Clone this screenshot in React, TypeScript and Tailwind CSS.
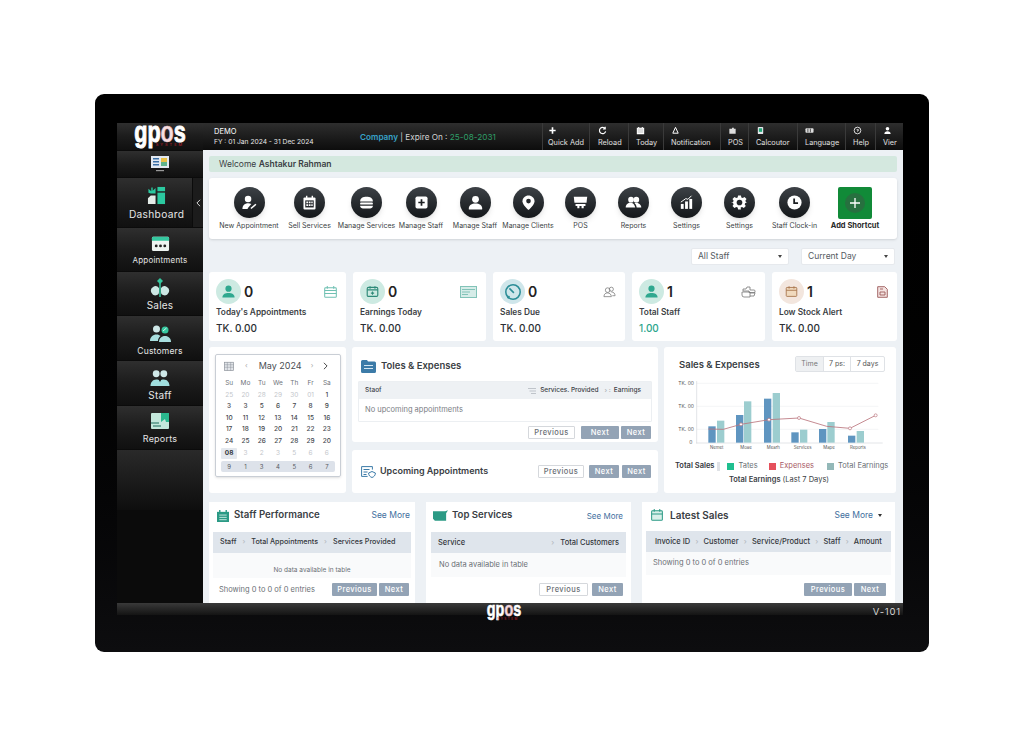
import React from "react";

const F = "font-['Inter','Noto_Sans',sans-serif]";

function Logo({ small }: { small?: boolean }) {
  return (
    <div className={small ? "relative h-[17px] w-[36px] shrink-0" : "relative h-[27px] w-[56px] shrink-0"}>
      <div className={small
        ? "flex justify-center font-['Liberation_Sans',sans-serif] font-bold text-[20px] leading-[10px] h-[10px] text-white scale-x-[0.72] [-webkit-text-stroke:0.6px_white]"
        : "flex justify-center font-['Liberation_Sans',sans-serif] font-bold text-[30px] leading-[17px] h-[17px] text-white scale-x-[0.72] [-webkit-text-stroke:1px_white]"}>
        <span>gp</span><span className="text-[#f4dfe1] [-webkit-text-stroke:0.6px_#e9b9bf]">o</span><span>s</span>
      </div>
      <div className={small
        ? "absolute left-[8px] right-0 top-[14px] text-center text-[3px] leading-[3px] tracking-[1.500px] text-[#d3202f]"
        : "absolute left-[20px] right-0 top-[20px] text-center text-[4px] leading-[4px] tracking-[2px] text-[#c51f2e]"}>SYSTEM</div>
    </div>
  );
}

const paths: Record<string, React.ReactNode> = {
  newappt: <><circle cx="10" cy="7" r="4.6" fill="#fff" /><path d="M2 21c0-5 3.6-8 8-8 1.8 0 3.3.4 4.6 1.2L9.5 20v1z" fill="#fff" /><path d="M14 20.5l7-6" stroke="#fff" strokeWidth="2.2" fill="none" /></>,
  sell: <><path d="M5 5h14a1.500 1.500 0 0 1 1.500 1.500v14A1.500 1.500 0 0 1 19 22H5a1.500 1.500 0 0 1-1.500-1.500v-14A1.500 1.500 0 0 1 5 5z" fill="#fff" /><rect x="7" y="2.500" width="2" height="4" fill="#fff" /><rect x="15" y="2.500" width="2" height="4" fill="#fff" /><path d="M6 9h12v10H6z" fill="#24272b" /><path d="M7.500 10.500h2.500V13H7.500zM11 10.500h2.500V13H11zM14.500 10.500h2V13h-2zM7.500 14.500h2.500V17H7.500zM11 14.500h2.500V17H11zM14.500 14.500h2V17h-2z" fill="#fff" /></>,
  burger: <><path d="M3 10.500C3 6 7 4 12 4s9 2 9 6.500z" fill="#fff" /><rect x="3" y="12" width="18" height="2.800" rx="1.200" fill="#fff" /><path d="M3 16.500h18v.5c0 2-2 3.500-4 3.500H7c-2 0-4-1.500-4-3.500z" fill="#fff" /></>,
  plus: <><rect x="3.500" y="3.500" width="17" height="17" rx="2.500" fill="#fff" /><path d="M12 7.500v9M7.500 12h9" stroke="#1c1f22" strokeWidth="2.400" /></>,
  user: <><circle cx="12" cy="7.500" r="4.800" fill="#fff" /><path d="M2.500 21c0-5 4-7.500 9.500-7.500S21.500 16 21.500 21c0 .5-.4 1-1 1h-17c-.6 0-1-.5-1-1z" fill="#fff" /></>,
  pin: <><path d="M12 2c-4.700 0-8.500 3.600-8.500 8.200C3.500 15.500 12 22.500 12 22.500s8.500-7 8.500-12.300C20.500 5.600 16.700 2 12 2z" fill="#fff" /><circle cx="12" cy="10" r="3.300" fill="#24272b" /></>,
  cart: <><path d="M2.500 4h19l-1 8.500h-17z" fill="#fff" /><path d="M5 14h14v3h-2.500v3h-3v-3h-3v3h-3v-3H5z" fill="#fff" /></>,
  users: <><circle cx="8.500" cy="8" r="4" fill="#fff" /><circle cx="16" cy="8" r="4" fill="#fff" /><path d="M1 19c0-4 3-6.500 7-6.500 3 0 5 1.500 6.500 6.500z" fill="#fff" /><path d="M15 12.500c4 0 8 2.500 8 6.500h-6.500C16 16 15 14 13.500 13z" fill="#fff" /></>,
  chart: <><rect x="4" y="14" width="4" height="7" fill="#fff" /><rect x="10" y="10.500" width="4" height="10.500" fill="#fff" /><rect x="16" y="7" width="4" height="14" fill="#fff" /><path d="M4 11.500l7-5 3 1 5-5" stroke="#fff" strokeWidth="1.400" fill="none" /></>,
  gear: <><path d="M10 2h4l.6 2.900 2 .9 2.500-1.600 2.800 2.800-1.600 2.500.9 2L23 12v0l-2.800.6-.9 2 1.600 2.500-2.800 2.800-2.500-1.600-2 .9L14 22h-4l-.6-2.800-2-.9-2.500 1.600-2.800-2.800 1.600-2.500-.9-2L0 12l2.800-.5.9-2-1.600-2.500 2.800-2.800 2.500 1.600 2-.9z" fill="#fff" /><circle cx="12" cy="12" r="4" fill="#24272b" /></>,
  clock: <><circle cx="12" cy="12" r="10" fill="#fff" /><path d="M11.500 6.500V13H17" stroke="#1c1f22" strokeWidth="2.500" fill="none" /></>,
};

function Glyph({ name, size }: { name: string; size: string }) {
  return <svg viewBox="0 0 24 24" className={size}>{paths[name]}</svg>;
}

const shortcuts = [
  { w: "w-[62px]", i: "newappt", l: "New Appointment" },
  { w: "w-[59px]", i: "sell", l: "Sell Services" },
  { w: "w-[55px]", i: "burger", l: "Manage Services" },
  { w: "w-[54px]", i: "plus", l: "Manage Staff" },
  { w: "w-[54px]", i: "user", l: "Manage Staff" },
  { w: "w-[52px]", i: "pin", l: "Manage Clients" },
  { w: "w-[53px]", i: "cart", l: "POS" },
  { w: "w-[53px]", i: "users", l: "Reports" },
  { w: "w-[53px]", i: "chart", l: "Settings" },
  { w: "w-[53px]", i: "gear", l: "Settings" },
  { w: "w-[57px]", i: "clock", l: "Staff Clock-in" },
];

const headerItems = [
  { w: "w-[47px]", pl: "pl-[5px]", t: "Quick Add", ic: <path d="M5 1.500v7M1.500 5h7" stroke="#fff" strokeWidth="1.800" /> },
  { w: "w-[39px]", pl: "pl-[8px]", t: "Reload", ic: <path d="M8 3a3.500 3.500 0 1 0 .5 3M8 .8V3.300H5.500" stroke="#fff" strokeWidth="1.300" fill="none" /> },
  { w: "w-[35px]", pl: "pl-[7px]", t: "Today", ic: <path d="M1.500 2.500h7v6h-7zM3 1v2M7 1v2" stroke="#fff" strokeWidth="1.200" fill="#ddd" /> },
  { w: "w-[57px]", pl: "pl-[7px]", t: "Notification", ic: <path d="M5 1.500L8 8H2z" stroke="#fff" strokeWidth="1.100" fill="none" /> },
  { w: "w-[28px]", pl: "pl-[7px]", t: "POS", ic: <path d="M1.500 3h3V2h2v1h2v5.500h-7z" fill="#ddd" /> },
  { w: "w-[49px]", pl: "pl-[7px]", t: "Calcoutor", ic: <><rect x="2" y="1" width="6" height="8" rx="1" fill="#e5e7eb" /><rect x="3.200" y="2.500" width="3.600" height="4" fill="#22a777" /></> },
  { w: "w-[48px]", pl: "pl-[7px]", t: "Language", ic: <><rect x="0.500" y="2.500" width="9" height="5" rx="1" fill="#ddd" /><path d="M3.200 3v4M6 3v4" stroke="#222" strokeWidth=".8" /></> },
  { w: "w-[30px]", pl: "pl-[7px]", t: "Help", ic: <><circle cx="5" cy="5" r="3.700" stroke="#fff" strokeWidth=".9" fill="none" /><path d="M4 4h2v1.200H5v1" stroke="#fff" strokeWidth=".8" fill="none" /></> },
  { w: "w-[28px]", pl: "pl-[7px]", t: "Vier", ic: <><circle cx="5" cy="3" r="2" fill="#fff" /><path d="M1.500 9c0-2.500 1.500-3.300 3.500-3.300S8.500 6.500 8.500 9z" fill="#fff" /></> },
];

function SideIcon({ name }: { name: string }) {
  if (name === "dash") return (
    <svg viewBox="0 0 20 20" className="w-[19px] h-[19px]">
      <rect x="11" y="1" width="8" height="4.500" fill="#2bc9a0" /><rect x="11" y="7" width="8" height="12" fill="#2bc9a0" />
      <path d="M1 19v-6l3-3h5v9z" fill="#e4ece8" /><path d="M1.500 3l3 2.500V1.500h1.500v3.500L9 2v6H4L1.500 7z" fill="#2bc9a0" />
    </svg>
  );
  if (name === "appt") return (
    <svg viewBox="0 0 20 20" className="w-[19px] h-[19px]">
      <rect x="1" y="3" width="18" height="15" rx="1.500" fill="#eef4f1" /><path d="M1 4.500A1.500 1.500 0 0 1 2.500 3h15A1.500 1.500 0 0 1 19 4.500V7H1z" fill="#35c79f" />
      <circle cx="5.500" cy="12.500" r="1.500" fill="#222" /><circle cx="10" cy="12.500" r="1.500" fill="#222" /><circle cx="14.500" cy="12.500" r="1.500" fill="#222" />
    </svg>
  );
  if (name === "sales") return (
    <svg viewBox="0 0 20 20" className="w-[20px] h-[20px]">
      <path d="M10 0l3 3-3 3-3-3z" fill="#35c79f" /><path d="M9 10a4.500 4.500 0 1 0-2 7c1.500-.5 2-1.500 2-3z" fill="#cde8e4" /><path d="M11 10a4.500 4.500 0 1 1 2 7c-1.500-.5-2-1.500-2-3z" fill="#cde8e4" />
      <path d="M10 5v14" stroke="#35c79f" strokeWidth="1.500" />
    </svg>
  );
  if (name === "cust") return (
    <svg viewBox="0 0 22 20" className="w-[23px] h-[20px]">
      <circle cx="7" cy="5" r="3.500" fill="#cfe8e8" /><circle cx="15.500" cy="6" r="3.500" fill="#35c79f" />
      <path d="M13.500 7l3.500-3" stroke="#fff" strokeWidth=".8" />
      <path d="M0.500 17c0-4 3-6.500 6.500-6.500 2 0 3 .7 4 1.500-1.500 1.200-2.500 3-2.500 5z" fill="#a8dede" /><path d="M9.500 18c0-3.500 2.500-6 6-6s6 2.500 6 6z" fill="#a8dede" />
    </svg>
  );
  if (name === "staff") return (
    <svg viewBox="0 0 22 20" className="w-[22px] h-[19px]">
      <circle cx="7" cy="5" r="3.600" fill="#cfe8e8" /><circle cx="15" cy="5" r="3.600" fill="#cfe8e8" />
      <path d="M1 18c0-4 2.500-7 6-7s4 2 4 2 .5-2 4-2 6 3 6 7z" fill="#9fdede" /><path d="M10 11l1 3 1-3z" fill="#111" />
    </svg>
  );
  if (name === "rep") return (
    <svg viewBox="0 0 20 20" className="w-[20px] h-[20px]">
      <rect x="1" y="2" width="18" height="16" rx="1" fill="#c4e8dc" /><path d="M11 2h8v9h-3l-1 -3-4 3z" fill="#2bb98f" /><path d="M1 12h8M3 15h8" stroke="#1a6b5a" strokeWidth="1.200" />
    </svg>
  );
  return (
    <svg viewBox="0 0 20 20" className="w-[20px] h-[20px]">
      <rect x="1" y="2" width="18" height="12" fill="#e2e8f0" /><rect x="3" y="4" width="6" height="1.500" fill="#3a6ea5" /><rect x="3" y="7" width="6" height="1.500" fill="#3a6ea5" /><rect x="3" y="10" width="6" height="1.500" fill="#3a6ea5" />
      <rect x="11" y="4" width="6" height="4" fill="#e9c046" /><rect x="11" y="8" width="6" height="4" fill="#5fb38b" /><rect x="6" y="16" width="8" height="1.200" fill="#999" />
    </svg>
  );
}

const sideItems = [
  { h: "h-[43px]", i: "appt", t: "Appointments", ts: "text-[8px]", p: "pt-[0px]" },
  { h: "h-[43px]", i: "sales", t: "Sales", ts: "text-[10px]", p: "pt-[2px]" },
  { h: "h-[44px]", i: "cust", t: "Customers", ts: "text-[8.500px]", p: "pt-[5px]" },
  { h: "h-[44px]", i: "staff", t: "Staff", ts: "text-[10px]", p: "pt-[3px]" },
  { h: "h-[43px]", i: "rep", t: "Reports", ts: "text-[9px]", p: "pt-[0px]" },
];

const itemBg = "bg-gradient-to-b from-[#2f2f2f] via-[#1c1c1c] to-[#101010]";

function Sidebar() {
  return (
    <div className="w-[86px] shrink-0 flex flex-col bg-[#0b0b0b]">
      <div className={`h-[27px] flex items-start justify-center ${itemBg}`}><Logo /></div>
      <div className={`mt-[1px] h-[26px] flex items-center justify-center ${itemBg}`}><SideIcon name="mon" /></div>
      <div className="mt-[1px] h-[49px] flex">
        <div className={`w-[76px] pl-[4px] flex flex-col items-center justify-center gap-[3px] ${itemBg}`}>
          <SideIcon name="dash" />
          <span className="text-[10.200px] leading-[12px] tracking-[0.3px] text-[#e5e5e5]">Dashboard</span>
        </div>
        <div className="w-[10px] ml-[1px] flex items-center justify-center bg-[#1c1c1c]">
          <svg viewBox="0 0 6 10" className="w-[5px] h-[8px]"><path d="M5 1L1 5l4 4" stroke="#ddd" strokeWidth="1.200" fill="none" /></svg>
        </div>
      </div>
      <div className="mt-[1px] flex flex-col gap-[1px]">
        {sideItems.map((s) => (
          <div key={s.t} className={`${s.h} ${s.p} flex flex-col items-center justify-center gap-[2px] ${itemBg}`}>
            <SideIcon name={s.i} />
            <span className={`${s.ts} leading-[11px] tracking-[0.2px] text-[#e5e5e5]`}>{s.t}</span>
          </div>
        ))}
      </div>
      <div className="mt-[1px] h-[60px] bg-gradient-to-b from-[#2a2a2a] to-[#0e0e0e]" />
    </div>
  );
}

function Header() {
  return (
    <div className="flex-1 h-[27px] flex bg-gradient-to-b from-[#2e2e2e] to-[#0d0d0d] text-white">
      <div className="w-[339px] shrink-0 flex items-center">
        <div className="pl-[11px] w-[157px] shrink-0">
          <div className="text-[7.500px] leading-[10px]">DEMO</div>
          <div className="text-[6.700px] leading-[10px] text-[#e5e5e5] whitespace-nowrap">FY : 01 Jan 2024 - 31 Dec 2024</div>
        </div>
        <div className="text-[8.200px] whitespace-nowrap pt-[1px] text-[#d4d4d4]">
          <span className="font-semibold text-[#38a3c9]">Company</span> | Expire On : <span className="text-[#2f9e68]">25-08-2031</span>
        </div>
      </div>
      {headerItems.map((h) => (
        <div key={h.t} className={`${h.w} ${h.pl} shrink-0 border-l border-[#3a3a3a] flex flex-col justify-center`}>
          <svg viewBox="0 0 10 10" className="w-[9px] h-[9px]">{h.ic}</svg>
          <span className="text-[7.300px] leading-[10px] mt-[3px] text-[#e0e0e0] whitespace-nowrap">{h.t}</span>
        </div>
      ))}
    </div>
  );
}

function Shortcuts() {
  return (
    <div className="mt-[6px] h-[61px] rounded-[3px] bg-white shadow-sm flex pl-[9px] pt-[9px]">
      {shortcuts.map((s, i) => (
        <div key={i} className={`${s.w} shrink-0 flex flex-col items-center`}>
          <div className="w-[31px] h-[31px] rounded-full bg-gradient-to-b from-[#3d4247] to-[#14171a] shadow-md flex items-center justify-center">
            <Glyph name={s.i} size="w-[17px] h-[17px]" />
          </div>
          <span className="mt-[3px] text-[7px] leading-[10px] text-[#3b3f44] whitespace-nowrap">{s.l}</span>
        </div>
      ))}
      <div className="w-[64px] shrink-0 flex flex-col items-center">
        <div className="w-[34px] h-[32px] rounded-[2px] bg-[#118a38] flex items-center justify-center">
          <div className="w-[20px] h-[20px] rounded-full bg-[#27703f] flex items-center justify-center">
            <svg viewBox="0 0 12 12" className="w-[12px] h-[12px]"><path d="M6 1v10M1 6h10" stroke="#fff" strokeWidth="1.300" /></svg>
          </div>
        </div>
        <span className="mt-[2px] text-[7.500px] leading-[10px] font-bold text-[#2a2a2a] whitespace-nowrap">Add Shortcut</span>
      </div>
    </div>
  );
}

function Select({ w, t }: { w: string; t: string }) {
  return (
    <div className={`${w} h-[17px] bg-white rounded-[2px] border border-[#e6e9ed] flex items-center justify-between pl-[6px] pr-[6px] text-[8.500px] text-[#555b62]`}>
      <span>{t}</span>
      <span className="w-0 h-0 border-x-[2.500px] border-x-transparent border-t-[3px] border-t-[#444]" />
    </div>
  );
}

const stats = [
  { w: "w-[137px]", n: "0", t: "Today's Appointments", v: "TK. 0.00", c: "bg-[#cdeae2]", kind: "person", r: "cal" },
  { w: "w-[133px]", n: "0", t: "Earnings Today", v: "TK. 0.00", c: "bg-[#cdeae2]", kind: "earn", r: "news" },
  { w: "w-[132px]", n: "0", t: "Sales Due", v: "TK. 0.00", c: "bg-[#cfe6ea]", kind: "due", r: "ppl" },
  { w: "w-[133px]", n: "1", t: "Total Staff", v: "1.00", c: "bg-[#cdeae2]", kind: "person", r: "cloud", vc: "text-[#2ba58c]" },
  { w: "w-[125px]", n: "1", t: "Low Stock Alert", v: "TK. 0.00", c: "bg-[#f3e6de]", kind: "stock", r: "doc" },
];

function StatIcon({ k }: { k: string }) {
  if (k === "earn") return <svg viewBox="0 0 16 16" className="w-[13px] h-[13px]"><rect x="1.500" y="3" width="13" height="11" rx="1.500" fill="none" stroke="#2e8a78" strokeWidth="1.400" /><path d="M1.500 6h13M5 1.500v3M11 1.500v3M8 8v4M6 10h4" stroke="#2e8a78" strokeWidth="1.300" /></svg>;
  if (k === "due") return <svg viewBox="0 0 20 20" className="w-[18px] h-[18px]"><circle cx="10" cy="10" r="8" fill="none" stroke="#2a8d96" strokeWidth="1.700" /><path d="M6 6l5 5M4 17l2-2.500" stroke="#2a8d96" strokeWidth="1.700" /></svg>;
  if (k === "stock") return <svg viewBox="0 0 16 16" className="w-[13px] h-[13px]"><rect x="1.500" y="3" width="13" height="11" rx="1" fill="#f0d9bd" stroke="#a9764f" strokeWidth="1.100" /><path d="M1.500 6.500h13M5 1.500v3M11 1.500v3" stroke="#a9764f" strokeWidth="1.100" /></svg>;
  return <svg viewBox="0 0 16 16" className="w-[15px] h-[15px]"><circle cx="8" cy="5" r="3.300" fill="#2fa88f" /><path d="M1.500 14.500c0-3.500 2.800-5 6.500-5s6.500 1.500 6.500 5z" fill="#2fa88f" /></svg>;
}

function StatRight({ k }: { k: string }) {
  if (k === "cal") return <svg viewBox="0 0 14 13" className="w-[13px] h-[12px]"><rect x="0.700" y="2" width="12.600" height="10.300" rx="1" fill="none" stroke="#6fc0b2" strokeWidth="1.100" /><path d="M.7 5h12.600M.7 8h12.600M3.500 0v3M10.500 0v3" stroke="#6fc0b2" strokeWidth="1.100" /></svg>;
  if (k === "news") return <svg viewBox="0 0 17 12" className="w-[17px] h-[12px]"><rect x="0.500" y="0.500" width="16" height="11" fill="#d6ece8" stroke="#82c3b8" /><path d="M2 3.500h13M2 6h8M2 8.500h6" stroke="#82c3b8" /></svg>;
  if (k === "ppl") return <svg viewBox="0 0 14 12" className="w-[13px] h-[12px]"><circle cx="5" cy="4" r="2.500" fill="none" stroke="#777" strokeWidth=".8" /><circle cx="9" cy="3" r="2.200" fill="none" stroke="#777" strokeWidth=".8" /><path d="M1 11c0-3 2-4 4-4s4 1.500 4 4zM9 6c2.500 0 4 1.500 4 4h-3" fill="none" stroke="#777" strokeWidth=".8" /></svg>;
  if (k === "cloud") return <svg viewBox="0 0 15 12" className="w-[15px] h-[12px]"><path d="M2 5V3h3l1-2h3v3h4a1 1 0 0 1 1 1v1.500H8V5H2zM1 6h8v5H3a2 2 0 0 1-2-2zM9 7h5l-1 3H9" fill="none" stroke="#777" strokeWidth=".8" /></svg>;
  return <svg viewBox="0 0 11 12" className="w-[11px] h-[12px]"><path d="M.7.7h7l2.600 2.600v8H.7z" fill="#f4e3e1" stroke="#9c5a5a" strokeWidth=".9" /><path d="M3 3h3M3 6h5v3H3z" fill="none" stroke="#9c5a5a" strokeWidth=".9" /></svg>;
}

function Stats() {
  return (
    <div className="mt-[7px] flex gap-[7px]">
      {stats.map((s) => (
        <div key={s.t} className={`${s.w} shrink-0 h-[69px] bg-white rounded-[3px] pt-[7px] pl-[7px] pr-[9px]`}>
          <div className="flex items-center h-[25px]">
            <div className={`w-[25px] h-[25px] rounded-full ${s.c} flex items-center justify-center`}><StatIcon k={s.kind} /></div>
            <span className="ml-[3px] text-[14px] font-semibold text-[#222]">{s.n}</span>
            <span className="ml-auto"><StatRight k={s.r} /></span>
          </div>
          <div className="mt-[2px] text-[8.300px] leading-[12px] font-semibold text-[#3c3f44] whitespace-nowrap">{s.t}</div>
          <div className={`mt-[3px] text-[10px] leading-[14px] font-medium ${s.vc ?? "text-[#2b2e33]"}`}>{s.v}</div>
        </div>
      ))}
    </div>
  );
}

const calRows = [
  ["25", "20", "28", "29", "30", "01", "1"],
  ["3", "3", "5", "6", "7", "8", "9"],
  ["10", "11", "12", "13", "14", "15", "16"],
  ["17", "18", "19", "20", "21", "22", "23"],
  ["24", "25", "26", "27", "28", "29", "20"],
];

function Calendar() {
  return (
    <div className="w-[137px] shrink-0 bg-white rounded-[3px] pt-[7px] pl-[6px] pr-[5px]">
      <div className="h-[123px] border border-[#c9ced5] rounded-[2px] shadow-sm px-[5px]">
        <div className="h-[22px] flex items-center text-[#555]">
          <svg viewBox="0 0 12 12" className="ml-[3px] w-[10px] h-[10px]"><rect x=".5" y="1.500" width="11" height="10" fill="#e3e6ea" stroke="#8a9098" strokeWidth=".8" /><path d="M.5 4.500h11M.5 7.500h11M4 1.500v10M8 1.500v10" stroke="#8a9098" strokeWidth=".6" /></svg>
          <span className="ml-[11px] text-[7px] text-[#aaa]">‹</span>
          <span className="ml-[11px] text-[9px] text-[#4a4e54] whitespace-nowrap">May 2024</span>
          <span className="ml-[9px] text-[7px] text-[#aaa]">›</span>
          <svg viewBox="0 0 6 10" className="ml-[10px] w-[5px] h-[8px]"><path d="M1 1l4 4-4 4" stroke="#333" strokeWidth="1.100" fill="none" /></svg>
        </div>
        <div className="grid grid-cols-7 text-center text-[6.500px] leading-[11.600px] text-[#6f747a] mt-[1px]">
          {["Su", "Mo", "Tu", "We", "Th", "Fr", "Sa"].map((d) => <span key={d}>{d}</span>)}
          {calRows.flatMap((r, ri) => r.map((d, i) => (
            <span key={`${ri}-${i}`} className={ri === 0 && i < 6 ? "text-[#c3c6cb]" : "text-[#44484e] font-medium"}>{d}</span>
          )))}
          <span className="font-bold text-[#33373c] bg-[#e4e8ee] rounded-[1px]">08</span>
          {["3", "2", "3", "5", "6", "6"].map((d, i) => <span key={i} className="text-[#c3c6cb]">{d}</span>)}
        </div>
        <div className="mt-[2px] h-[11px] rounded-[2px] bg-[#dde2ea] grid grid-cols-7 text-center text-[6px] leading-[11px] text-[#555a61]">
          {["9", "1", "3", "4", "5", "6", "7"].map((d, i) => <span key={i}>{d}</span>)}
        </div>
      </div>
    </div>
  );
}

function Btn({ w, t, on, h = "h-[13px]" }: { w: string; t: string; on?: boolean; h?: string }) {
  return (
    <div className={`${w} ${h} rounded-[1px] flex items-center justify-center text-[7.500px] font-medium tracking-[0.4px] ${on ? "bg-[#93a3b5] text-white" : "bg-white border border-[#d5d8dc] text-[#6a6f75]"}`}>{t}</div>
  );
}

function Middle() {
  return (
    <div className="w-[306px] shrink-0 flex flex-col gap-[8px]">
      <div className="h-[95px] bg-white rounded-[3px] px-[6px] pt-[12px]">
        <div className="flex items-center pl-[3px] h-[14px]">
          <svg viewBox="0 0 15 13" className="w-[15px] h-[13px]"><path d="M0 1.500A1.500 1.500 0 0 1 1.500 0H6l1 1.500h6.500A1.500 1.500 0 0 1 15 3v8.500a1.500 1.500 0 0 1-1.500 1.500h-12A1.500 1.500 0 0 1 0 11.500z" fill="#3c7ba8" /><path d="M3 5.500h9M3 8.500h9" stroke="#d4e6f2" strokeWidth="1.100" /></svg>
          <span className="ml-[5px] text-[9.500px] font-semibold text-[#3a3e44]">Toles &amp; Expenses</span>
        </div>
        <div className="mt-[8px] border border-[#eceff2] rounded-[1px]">
          <div className="h-[17px] bg-[#eef1f4] flex items-center px-[6px] text-[6.500px] font-medium text-[#3d4147]">
            <span>Staof</span>
            <svg viewBox="0 0 8 6" className="ml-auto w-[8px] h-[6px]"><path d="M0 .5h8M1.500 3h6.500M3 5.500h5" stroke="#aab0b7" strokeWidth=".7" /></svg>
            <span className="ml-[4px]">Services. Provided</span>
            <span className="ml-[6px] text-[#aab0b7]">› :</span>
            <span className="ml-[3px] mr-[4px]">Earnings</span>
          </div>
          <div className="h-[22px] flex items-center pl-[6px] text-[7.500px] text-[#7a7e84]">No upcoming appointments</div>
        </div>
        <div className="mt-[4px] flex justify-end gap-[2px] pr-[1px]">
          <Btn w="w-[47px] mr-[4px]" t="Previous" />
          <Btn w="w-[38px]" t="Next" on />
          <Btn w="w-[30px]" t="Next" on />
        </div>
      </div>
      <div className="h-[43px] bg-white rounded-[3px] flex items-center pl-[9px] pr-[7px]">
        <svg viewBox="0 0 15 12" className="w-[15px] h-[12px]"><path d="M.6.6h10.800v3M.6.6v9.800h6M2.500 3.500h6M2.500 6h4M2.500 8.500h3" fill="none" stroke="#3c7ba8" strokeWidth="1" /><path d="M11 5.500l3.400 1.500c0 2.500-1.500 3.800-3.400 4.500-1.900-.7-3.400-2-3.400-4.500z" fill="none" stroke="#3c7ba8" strokeWidth="1" /></svg>
        <span className="ml-[4px] pb-[2px] text-[9px] font-semibold text-[#3a3e44] whitespace-nowrap">Upcoming Appointments</span>
        <div className="ml-auto flex gap-[3px]">
          <Btn w="w-[46px] mr-[2px]" t="Previous" />
          <Btn w="w-[30px]" t="Next" on />
          <Btn w="w-[29px]" t="Next" on />
        </div>
      </div>
    </div>
  );
}

const bars = [
  [265, 484, 291, 467], [348, 450, 372, 409], [432, 401, 458, 384], [514, 502, 540, 494], [597, 492, 622, 471], [684, 512, 710, 498],
];
const xl = [["Nemet", 290], ["Moae", 378], ["Mearh", 460], ["Services", 548], ["Mape", 627], ["Reports", 714]] as const;
const line = "265,492 310,493 363,478 447,464 537,459 620,484 690,490 767,451";

function Chart() {
  return (
    <div className="w-[232px] shrink-0 bg-white rounded-[3px] flex flex-col">
      <div className="mt-[9px] pl-[15px] pr-[11px] flex items-center justify-between h-[16px]">
        <span className="pt-[2px] text-[9.500px] font-semibold text-[#3a3e44] whitespace-nowrap">Sales &amp; Expenses</span>
        <div className="flex w-[90px] h-[16px] border border-[#dfe2e6] rounded-[2px] text-[7px] text-[#555]">
          <span className="w-[27px] bg-[#eef0f2] flex items-center justify-center text-[#777]">Time</span>
          <span className="w-[28px] border-x border-[#dfe2e6] flex items-center justify-center">7 ps:</span>
          <span className="flex-1 flex items-center justify-center">7 days</span>
        </div>
      </div>
      <svg viewBox="150 330 678 270" className="mt-[3px] ml-[6px] w-[226px] h-[90px]">
        {[355, 424, 493].map((y) => <line key={y} x1="230" x2="775" y1={y} y2={y} stroke="#eef0f2" strokeWidth="2" />)}
        <line x1="230" x2="230" y1="348" y2="535" stroke="#d5d8dc" strokeWidth="2" />
        <line x1="228" x2="788" y1="534" y2="534" stroke="#d5d8dc" strokeWidth="2" />
        {[["TK. 00", 359], ["TK. 00", 428], ["TK. 00", 497]].map(([t, y]) => (
          <text key={String(y)} x="222" y={Number(y)} textAnchor="end" fontSize="15" fill="#555" fontFamily="Inter">{t}</text>
        ))}
        <text x="217" y="538" textAnchor="end" fontSize="15" fill="#555" fontFamily="Inter">0</text>
        {bars.map(([a, ah, b, bh], i) => (
          <g key={i}>
            <rect x={a} y={ah} width="22" height={533 - ah} fill="#5f95c0" />
            <rect x={b} y={bh} width="22" height={533 - bh} fill="#9ccdcf" />
          </g>
        ))}
        <polyline points={line} fill="none" stroke="#b9737c" strokeWidth="2.500" />
        {[[363, 478], [447, 464], [537, 459], [690, 490], [767, 451]].map(([x, y]) => (
          <circle key={x} cx={x} cy={y} r="4.500" fill="#fff" stroke="#b9737c" strokeWidth="2" />
        ))}
        {xl.map(([t, x]) => <text key={t} x={x} y="553" textAnchor="middle" fontSize="13" fill="#555" fontFamily="Inter">{t}</text>)}
      </svg>
      <div className="mt-[-5px] pl-[11px] flex items-center text-[7.500px] whitespace-nowrap h-[12px]">
        <span className="font-semibold text-[#33373c]">Total Sales</span>
        <span className="ml-[3px] w-[3px] h-[9px] bg-[#dfe2e6]" />
        <span className="ml-[7px] w-[7px] h-[7px] bg-[#1fbf8f]" />
        <span className="ml-[4px] text-[#6a6f75]">Tates</span>
        <span className="ml-[11px] w-[7px] h-[7px] bg-[#e5505c]" />
        <span className="ml-[4px] text-[#a85a66]">Expenses</span>
        <span className="ml-[13px] w-[7px] h-[7px] bg-[#93b8b8]" />
        <span className="ml-[4px] text-[#6a6f75]">Total Earnings</span>
      </div>
      <div className="mt-[2px] text-center text-[7.500px] text-[#3a3e44] whitespace-nowrap pr-[2px]"><span className="font-semibold">Total Earnings</span> (Last 7 Days)</div>
    </div>
  );
}

function Sep() {
  return <span className="text-[#b5bac1]">›</span>;
}

function Staff() {
  return (
    <div className="w-[206px] shrink-0 bg-white px-[4px] overflow-hidden">
      <div className="h-[30px] pb-[3px] flex items-center pl-[4px] pr-[1px]">
        <svg viewBox="0 0 13 13" className="w-[12px] h-[12px]"><rect y="2" width="13" height="11" fill="#2b9a85" /><path d="M3 0v3M10 0v3" stroke="#2b9a85" strokeWidth="1.500" /><path d="M2.500 5.500h8M2.500 8h8M2.500 10.500h8" stroke="#dff4ee" strokeWidth=".9" /></svg>
        <span className="ml-[5px] text-[9.700px] font-semibold text-[#3a3e44]">Staff Performance</span>
        <span className="ml-auto text-[8.500px] text-[#3f6f9e]">See More</span>
      </div>
      <div className="h-[21px] bg-[#dfe5ec] flex items-center gap-[6px] px-[7px] text-[7.200px] font-medium text-[#33373c] whitespace-nowrap">
        <span>Staff</span><Sep /><span>Total Appointments</span><Sep /><span>Services Provided</span>
      </div>
      <div className="h-[25px] bg-[#f9fafb] flex items-end justify-center pb-[2px] text-[6.500px] text-[#6a6f75]">No data available in table</div>
      <div className="mt-[5px] flex items-center pl-[6px] pr-[2px] text-[7.500px] text-[#6a6f75] whitespace-nowrap">
        <span>Showing 0 to 0 of 0 entries</span>
        <div className="ml-auto flex gap-[2px]">
          <Btn w="w-[45px]" t="Previous" on />
          <Btn w="w-[30px]" t="Next" on />
        </div>
      </div>
    </div>
  );
}

function Top() {
  return (
    <div className="w-[205px] shrink-0 bg-white px-[5px] overflow-hidden">
      <div className="h-[30px] pb-[3px] flex items-center pl-[2px] pr-[3px]">
        <svg viewBox="0 0 16 11" className="w-[15px] h-[11px]"><path d="M0 1h13l3-1-2 3v8H2L0 9z" fill="#2b9a85" /></svg>
        <span className="ml-[4px] text-[9.600px] font-semibold text-[#3a3e44]">Top Services</span>
        <span className="ml-auto text-[8px] text-[#3f6f9e]">See More</span>
      </div>
      <div className="h-[21px] bg-[#dfe5ec] flex items-center px-[7px] text-[7.500px] font-medium text-[#33373c] whitespace-nowrap">
        <span>Service</span>
        <span className="ml-auto"><Sep /></span>
        <span className="ml-[6px]">Total Customers</span>
      </div>
      <div className="h-[24px] bg-[#f9fafb] flex items-center pl-[8px] text-[7.500px] text-[#6a6f75]">No data available in table</div>
      <div className="mt-[6px] flex justify-end gap-[4px] pr-[3px]">
        <Btn w="w-[49px]" t="Previous" h="h-[13px]" />
        <Btn w="w-[31px]" t="Next" on />
      </div>
    </div>
  );
}

function Latest() {
  return (
    <div className="w-[253px] shrink-0 bg-white px-[4px] overflow-hidden">
      <div className="h-[29px] pb-[3px] flex items-center pl-[5px] pr-[9px]">
        <svg viewBox="0 0 13 13" className="w-[12px] h-[12px]"><rect x=".7" y="2" width="11.600" height="10.300" rx="1" fill="#d9f0ea" stroke="#2b9a85" strokeWidth="1.100" /><path d="M.7 5.500h11.600M3.500 0v3M9.500 0v3" stroke="#2b9a85" strokeWidth="1.100" /></svg>
        <span className="ml-[7px] text-[10px] font-semibold text-[#3a3e44]">Latest Sales</span>
        <span className="ml-auto text-[8.500px] text-[#3f6f9e]">See More</span>
        <span className="ml-[5px] w-0 h-0 border-x-[2.500px] border-x-transparent border-t-[3px] border-t-[#333]" />
      </div>
      <div className="h-[21px] bg-[#dfe5ec] flex items-center justify-between px-[9px] text-[7.500px] font-medium text-[#33373c] whitespace-nowrap">
        <span>Invoice ID</span><Sep /><span>Customer</span><Sep /><span>Service/Product</span><Sep /><span>Staff</span><Sep /><span>Amount</span>
      </div>
      <div className="h-[23px] pb-[2px] bg-[#f9fafb] flex items-center pl-[7px] text-[7.500px] text-[#6a6f75]">Showing 0 to 0 of 0 entries</div>
      <div className="mt-[8px] flex justify-end gap-[2px] pr-[5px]">
        <Btn w="w-[48px]" t="Previous" on />
        <Btn w="w-[32px]" t="Next" on />
      </div>
    </div>
  );
}

export default function App() {
  return (
    <div className={`w-[1024px] h-[747px] bg-white overflow-hidden pt-[94px] pl-[95px] ${F}`}>
      <div className="w-[834px] h-[558px] rounded-[9px] bg-gradient-to-b from-[#000000] to-[#0d0d0f] pt-[29px] pl-[22px] pr-[26px]">
        <div className="flex h-[480px]">
          <Sidebar />
          <div className="flex-1 flex flex-col min-w-0">
            <Header />
            <div className="h-[453px] bg-[#edf1f5] px-[6px] pt-[6px] overflow-hidden">
              <div className="h-[16px] rounded-[2px] bg-[#d4e8df] flex items-center pl-[10px] text-[8.500px] text-[#3a3e44]">
                Welcome&nbsp;<span className="font-semibold">Ashtakur Rahman</span>
              </div>
              <Shortcuts />
              <div className="mt-[9px] flex justify-end gap-[12px] pr-[2px]">
                <Select w="w-[98px]" t="All Staff" />
                <Select w="w-[94px]" t="Current Day" />
              </div>
              <Stats />
              <div className="mt-[6px] flex gap-[6px] h-[146px]">
                <Calendar />
                <Middle />
                <Chart />
              </div>
              <div className="mt-[9px] flex gap-[11px] h-[101px]">
                <Staff />
                <Top />
                <Latest />
              </div>
            </div>
          </div>
        </div>
        <div className="h-[12px] bg-gradient-to-b from-[#3a3a3a] to-[#141414] flex items-start">
          <div className="ml-[369px] pt-[1px]"><Logo small /></div>
          <span className="ml-auto mr-[2px] text-[9.500px] leading-[17px] tracking-[0.8px] text-[#d5d5d5]">V-101</span>
        </div>
      </div>
    </div>
  );
}
